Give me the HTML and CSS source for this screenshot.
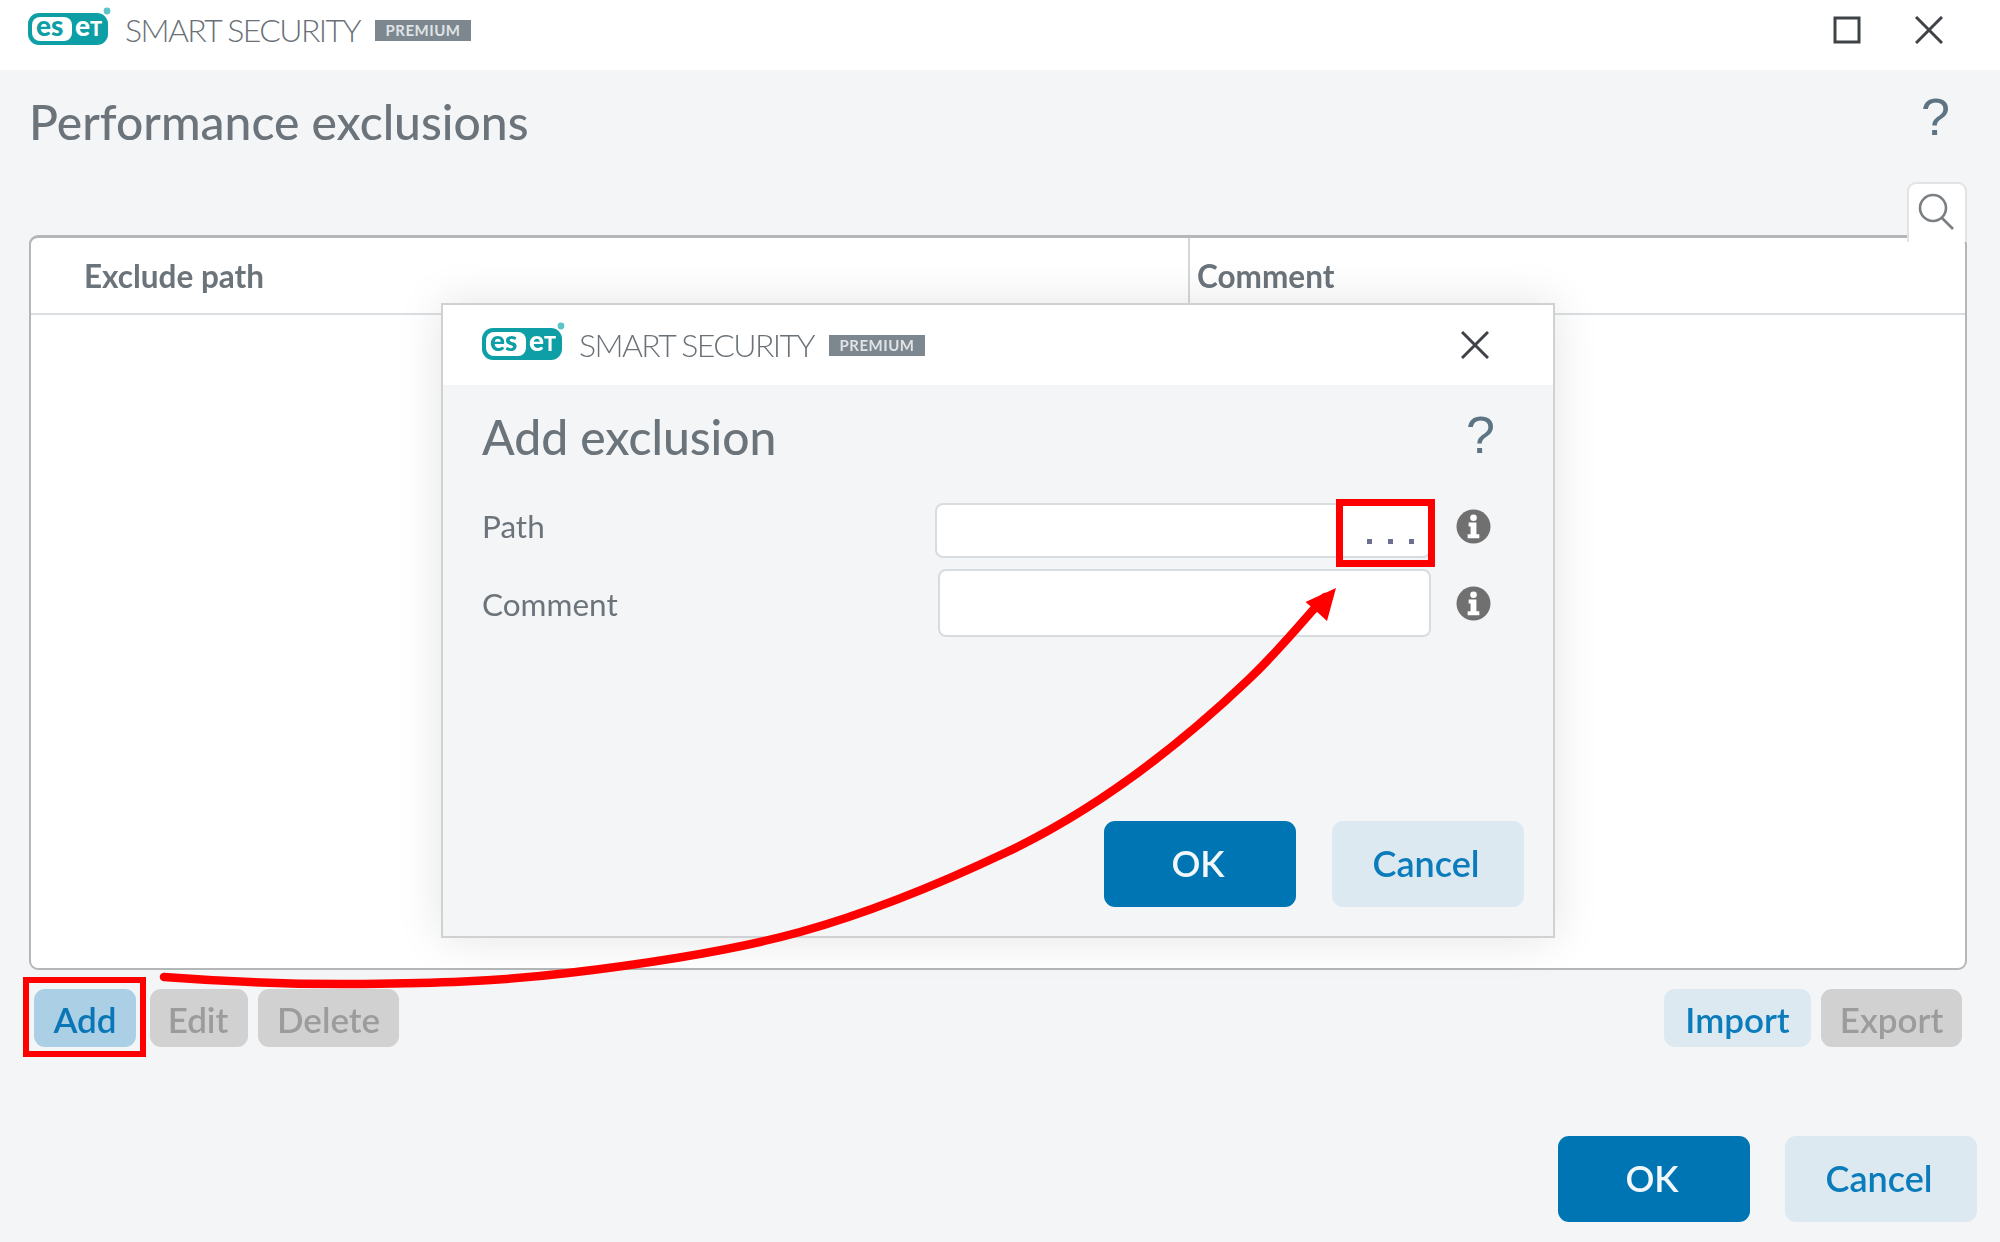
FILE: index.html
```html
<!DOCTYPE html>
<html lang="en">
<head>
<meta charset="utf-8">
<title>Performance exclusions</title>
<link rel="stylesheet" href="styles.css">
</head>
<body>
<div class="window">
  <header class="titlebar">
    <div class="brand">
      <svg class="logo" viewBox="0 0 84 38">
        <rect x="0" y="6" width="80" height="32" rx="11" class="logo-fill"/>
        <rect x="4" y="10" width="40" height="24" rx="8" class="logo-inner"/>
        <circle cx="79" cy="4" r="3.4" class="logo-dot"/>
        <text x="8" y="29" class="eset-dark">es</text>
        <text x="47" y="29" class="eset-light">e<tspan class="eset-t">T</tspan></text>
      </svg>
      <span class="product">SMART SECURITY</span>
      <span class="edition">PREMIUM</span>
    </div>
    <div class="controls">
      <svg class="ctl" viewBox="0 0 28 28"><rect x="2" y="2" width="24" height="24" class="stroke"/></svg>
      <svg class="ctl" viewBox="0 0 28 28"><path d="M1 1 27 27M27 1 1 27" class="stroke"/></svg>
    </div>
  </header>

  <main class="content">
    <div class="heading">
      <h1 class="title">Performance exclusions</h1>
      <span class="help help-main">?</span>
    </div>

    <div class="tabrow">
      <div class="searchtab">
        <svg class="search" viewBox="0 0 40 40"><circle cx="16" cy="15" r="13" class="thin"/><path d="M25 25 36 36" class="thin"/></svg>
      </div>
    </div>

    <section class="table">
      <div class="thead">
        <div class="th th-path">Exclude path</div>
        <div class="th th-comment">Comment</div>
      </div>
    </section>

    <div class="tools">
      <div class="group">
        <div class="marked">
          <button class="btn small active">Add</button>
          <span class="redbox redbox-add"></span>
        </div>
        <button class="btn small off btn-edit">Edit</button>
        <button class="btn small off btn-delete">Delete</button>
      </div>
      <div class="group">
        <button class="btn small soft btn-import">Import</button>
        <button class="btn small off btn-export">Export</button>
      </div>
    </div>

    <div class="footer">
      <button class="btn large primary">OK</button>
      <button class="btn large soft">Cancel</button>
    </div>
  </main>

  <section class="dialog">
    <header class="dialog-bar">
      <div class="brand">
        <svg class="logo" viewBox="0 0 84 38">
          <rect x="0" y="6" width="80" height="32" rx="11" class="logo-fill"/>
          <rect x="4" y="10" width="40" height="24" rx="8" class="logo-inner"/>
          <circle cx="79" cy="4" r="3.4" class="logo-dot"/>
          <text x="8" y="29" class="eset-dark">es</text>
          <text x="47" y="29" class="eset-light">e<tspan class="eset-t">T</tspan></text>
        </svg>
        <span class="product">SMART SECURITY</span>
        <span class="edition">PREMIUM</span>
      </div>
      <svg class="ctl ctl-dialog" viewBox="0 0 28 28"><path d="M1 1 27 27M27 1 1 27" class="stroke"/></svg>
    </header>
    <div class="dialog-body">
      <div class="dialog-head">
        <h2 class="title title-dialog">Add exclusion</h2>
        <span class="help help-dialog">?</span>
      </div>
      <div class="form">
        <label class="label label-path">Path</label>
        <div class="input input-path">
          <span class="dots"><i></i><i></i><i></i></span>
          <span class="redbox redbox-dots"></span>
        </div>
        <svg class="info info-path" viewBox="0 0 36 36"><circle cx="18" cy="18" r="17.5" class="info-disc"/><circle cx="18" cy="9" r="3.4" class="info-mark"/><path d="M13 14h8v12h3v4H12v-4h3v-8h-2z" class="info-mark"/></svg>
        <label class="label label-comment">Comment</label>
        <div class="input input-comment"></div>
        <svg class="info" viewBox="0 0 36 36"><circle cx="18" cy="18" r="17.5" class="info-disc"/><circle cx="18" cy="9" r="3.4" class="info-mark"/><path d="M13 14h8v12h3v4H12v-4h3v-8h-2z" class="info-mark"/></svg>
      </div>
      <div class="dialog-actions">
        <button class="btn large primary">OK</button>
        <button class="btn large soft">Cancel</button>
      </div>
    </div>
  </section>

  <svg class="arrow" viewBox="0 0 2000 1242" aria-hidden="true">
    <path class="arrow-line" d="M164 977C230 982 297 984.7 364 984C431 983.3 495 981.7 568 973C641 964.3 727 952.2 800 932C873 911.8 950 879 1007 852C1087 814 1168 756 1248 680C1276 653.3 1298 627 1313 610L1325 597"/>
    <path class="arrow-head" d="M1336 588 1305.5 602 1315 610 1327 621Z"/>
  </svg>
</div>
</body>
</html>
```
FILE: styles.css
```css
* { box-sizing: border-box; }
html, body { margin: 0; padding: 0; }
body {
  width: 2000px;
  height: 1242px;
  overflow: hidden;
  background: #f4f5f7;
  font-family: "Lato", "Open Sans", sans-serif;
}
.window {
  position: relative;
  width: 2000px;
  height: 1242px;
  display: flex;
  flex-direction: column;
  filter: blur(0.6px);
}

/* title bars */
.titlebar {
  height: 70px;
  flex: none;
  background: #fff;
  display: flex;
  align-items: center;
  justify-content: space-between;
  padding: 0 57px 10px 28px;
}
.brand { display: flex; align-items: center; }
.logo { width: 84px; height: 38px; margin-top: -8px; margin-right: 13px; flex: none; }
.logo-fill { fill: #0e9fa6; }
.logo-inner { fill: #fff; }
.logo-dot { fill: #5cc4c8; }
.eset-dark, .eset-light { font-family: "Lato", sans-serif; font-weight: 900; font-size: 28px; }
.eset-dark { fill: #0e9fa6; }
.eset-light { fill: #fff; }
.eset-t { font-size: 20px; }
.product {
  font-size: 32px;
  font-weight: 300;
  letter-spacing: -1.6px;
  color: #6a7177;
  width: 250px;
  margin-top: -2px;
  white-space: nowrap;
}
.edition {
  width: 96px;
  height: 21px;
  background: #7d878f;
  color: #dfe3e6;
  font-size: 15px;
  font-weight: 700;
  letter-spacing: 0.5px;
  display: flex;
  align-items: center;
  justify-content: center;
}
.controls { display: flex; align-items: center; gap: 54px; }
.ctl { width: 28px; height: 28px; display: block; }
.stroke { fill: none; stroke: #3f4347; stroke-width: 3; }
.thin { fill: none; stroke: #7a7f83; stroke-width: 2.6; }

/* main area */
.content { flex: 1; display: flex; flex-direction: column; min-height: 0; }
.heading {
  height: 112px;
  flex: none;
  display: flex;
  justify-content: space-between;
  padding: 22px 50px 0 29px;
}
.title {
  margin: 0;
  font-size: 48px;
  line-height: 60px;
  font-weight: 500;
  color: #6c747b;
}
.help {
  font-family: "Liberation Sans", sans-serif;
  font-size: 52px;
  line-height: 60px;
  color: #5d7484;
  font-weight: 400;
}
.help-main { margin-top: -5px; }

.tabrow { height: 53px; flex: none; display: flex; justify-content: flex-end; padding-right: 33px; }
.searchtab {
  position: relative;
  z-index: 1;
  width: 60px;
  height: 60px;
  background: #fff;
  border: 2px solid #e1e3e5;
  border-bottom: 0;
  border-radius: 9px 9px 0 0;
  padding: 9px 0 0 8px;
}
.search { width: 40px; height: 40px; display: block; }

.table {
  height: 735px;
  flex: none;
  margin: 0 33px 0 29px;
  background: #fff;
  border: 2px solid #b4b6b8;
  border-top-width: 3px;
  border-radius: 9px;
}
.thead {
  height: 77px;
  border-bottom: 2px solid #dcdfe1;
  display: grid;
  grid-template-columns: 1157px 1fr;
  align-items: stretch;
}
.th {
  font-size: 31.5px;
  font-weight: 700;
  color: #6c747b;
  display: flex;
  align-items: center;
}
.th-path { padding-left: 53px; }
.th-comment { padding-left: 7px; border-left: 2px solid #d5d8da; }

/* buttons */
.btn {
  border: 0;
  margin: 0;
  font-family: inherit;
  font-weight: 600;
  display: flex;
  align-items: center;
  justify-content: center;
  padding: 0;
}
.small { height: 58px; border-radius: 11px; font-size: 35px; padding-top: 1px; }
.large { width: 192px; height: 86px; border-radius: 11px; font-size: 36px; padding: 0 4px 2px 0; }
.active { width: 102px; background: #abd0e6; color: #0a76b5; }
.off { background: #d1d1d1; color: #9c9c9c; }
.soft { background: #dde9f1; color: #0a7bbb; }
.primary { background: #0075b3; color: #f1f7fa; }
.btn-edit { width: 98px; padding-right: 2px; }
.btn-delete { width: 141px; }
.btn-import { width: 147px; }
.btn-export { width: 141px; }

.tools {
  height: 58px;
  flex: none;
  margin-top: 19px;
  padding: 0 38px 0 34px;
  display: flex;
  justify-content: space-between;
}
.group { display: flex; gap: 10px; }
.marked { position: relative; margin-right: 4px; }
.redbox { position: absolute; border: 7px solid #ff0000; display: block; }
.redbox-add { left: -11px; top: -12px; width: 123px; height: 80px; border-width: 6px; }

.footer {
  flex: none;
  margin-top: 89px;
  padding-right: 23px;
  display: flex;
  justify-content: flex-end;
  gap: 35px;
}

/* dialog */
.dialog {
  position: absolute;
  left: 441px;
  top: 303px;
  width: 1114px;
  height: 635px;
  background: #f4f5f7;
  border: 2px solid #cfd1d3;
  box-shadow: 0 0 44px rgba(0, 0, 0, 0.11);
  display: flex;
  flex-direction: column;
}
.dialog-bar {
  height: 80px;
  flex: none;
  background: #fff;
  display: flex;
  align-items: center;
  justify-content: space-between;
  padding: 0 64px 0 39px;
}
.dialog-body { flex: 1; display: flex; flex-direction: column; padding: 0 29px 29px 39px; }
.dialog-head {
  height: 118px;
  flex: none;
  display: flex;
  justify-content: space-between;
  padding: 22px 29px 0 0;
}
.help-dialog { margin-top: -2px; }
.form {
  display: grid;
  grid-template-columns: 453px 496px 1fr;
  grid-template-rows: 55px 68px;
  row-gap: 11px;
  align-items: center;
}
.label { font-size: 31.5px; color: #6c747b; }
.label-path { margin-top: -10px; }
.label-comment { margin-top: 1px; }
.input {
  position: relative;
  height: 100%;
  background: #fff;
  border: 2px solid #d9dcde;
  border-radius: 8px;
}
.input-comment { margin-left: 3px; }
.dots { position: absolute; right: 15px; bottom: 12px; display: flex; gap: 16px; }
.dots i { display: block; width: 5px; height: 5px; background: #6d6f90; }
.redbox-dots { right: -6px; top: -6px; width: 99px; height: 68px; }
.info { width: 35px; height: 35px; justify-self: start; margin-left: 25px; }
.info-path { margin-top: -9px; }
.info-disc { fill: #707070; }
.info-mark { fill: #fff; }
.dialog-actions { margin-top: auto; display: flex; justify-content: flex-end; gap: 36px; }

/* annotation */
.arrow { position: absolute; inset: 0; width: 2000px; height: 1242px; pointer-events: none; }
.arrow-line { fill: none; stroke: #ff0000; stroke-width: 8.5; stroke-linecap: round; }
.arrow-head { fill: #ff0000; }
```
